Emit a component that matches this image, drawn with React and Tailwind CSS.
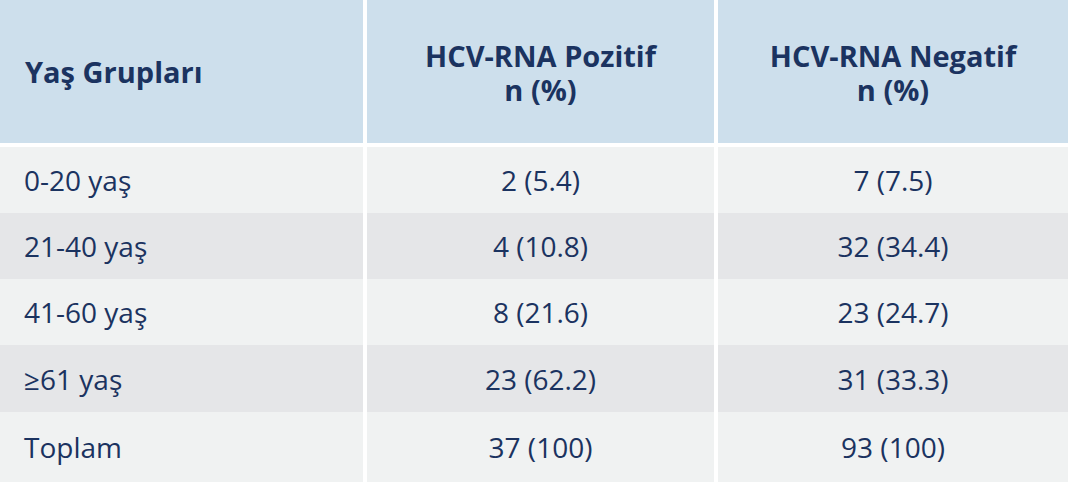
import React from "react";

const rows = [
  ["0-20 yaş", "2 (5.4)", "7 (7.5)", "h-[66px]", "bg-[#f0f2f2]"],
  ["21-40 yaş", "4 (10.8)", "32 (34.4)", "h-[66px]", "bg-[#e5e6e8]"],
  ["41-60 yaş", "8 (21.6)", "23 (24.7)", "h-[66px]", "bg-[#f0f2f2]"],
  ["≥61 yaş", "23 (62.2)", "31 (33.3)", "h-[67px]", "bg-[#e5e6e8]"],
  ["Toplam", "37 (100)", "93 (100)", "h-[70px]", "bg-[#f0f2f2]"],
];

export default function App() {
  return (
    <div
      className="w-[1069px] h-[482px] bg-white text-[#1b3360] overflow-hidden"
      style={{ fontFamily: '"Open Sans", "Noto Sans", sans-serif' }}
    >
      <div className="grid grid-cols-[363px_347px_350px] gap-x-[4px] h-[143px] mb-[4px] font-bold text-[29px] leading-[34px]">
        <div className="bg-[#cddfec] flex items-center pl-[25px]">Yaş Grupları</div>
        <div className="bg-[#cddfec] flex flex-col items-center justify-center text-center pt-[2px]">
          <span>HCV-RNA Pozitif</span>
          <span>n (%)</span>
        </div>
        <div className="bg-[#cddfec] flex flex-col items-center justify-center text-center pt-[2px]">
          <span>HCV-RNA Negatif</span>
          <span>n (%)</span>
        </div>
      </div>
      {rows.map(([a, b, c, h, bg]) => (
        <div key={a} className={`grid grid-cols-[363px_347px_350px] gap-x-[4px] text-[28px] ${h}`}>
          <div className={`${bg} flex items-center pl-[24px]`}>{a}</div>
          <div className={`${bg} flex items-center justify-center`}>{b}</div>
          <div className={`${bg} flex items-center justify-center`}>{c}</div>
        </div>
      ))}
    </div>
  );
}
